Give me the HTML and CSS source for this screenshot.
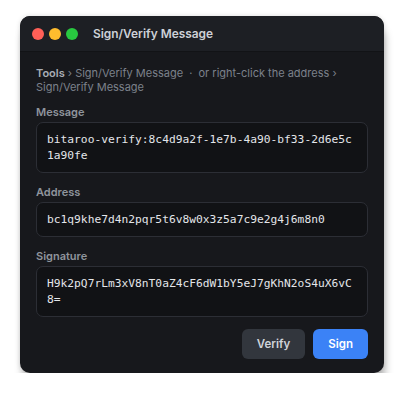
FILE: index.html
```html
<!DOCTYPE html>
<html lang="en">
<head>
<meta charset="utf-8">
<title>Sign/Verify Message</title>
<link rel="stylesheet" href="styles.css">
</head>
<body>
  <div class="window">
    <header class="titlebar">
      <div class="lights">
        <span class="light red"></span>
        <span class="light yellow"></span>
        <span class="light green"></span>
      </div>
      <div class="title">Sign/Verify Message</div>
    </header>
    <main class="content">
      <p class="crumbs"><b>Tools</b> › Sign/Verify Message <span class="dot">·</span> or right-click the address › Sign/Verify Message</p>

      <section class="field">
        <label class="label">Message</label>
        <div class="box">bitaroo-verify:8c4d9a2f-1e7b-4a90-bf33-2d6e5c1a90fe</div>
      </section>

      <section class="field">
        <label class="label">Address</label>
        <div class="box">bc1q9khe7d4n2pqr5t6v8w0x3z5a7c9e2g4j6m8n0</div>
      </section>

      <section class="field">
        <label class="label">Signature</label>
        <div class="box">H9k2pQ7rLm3xV8nT0aZ4cF6dW1bY5eJ7gKhN2oS4uX6vC8=</div>
      </section>

      <div class="actions">
        <button class="btn btn-secondary">Verify</button>
        <button class="btn btn-primary">Sign</button>
      </div>
    </main>
  </div>
</body>
</html>
```

FILE: styles.css
```css
html, body {
  margin: 0;
  padding: 0;
  background: #ffffff;
}

body {
  padding: 16px 20px 0 20px;
  font-family: Inter, "Noto Sans", "Liberation Sans", sans-serif;
}

.window {
  width: 364px;
  background: #17181c;
  border-radius: 10px;
  overflow: hidden;
  box-shadow: 2px 12px 8px -1px rgba(0, 0, 0, 0.28), 0 0 5px rgba(0, 0, 0, 0.14);
}

/* Title bar with traffic lights */
.titlebar {
  height: 35px;
  display: flex;
  align-items: center;
  padding-left: 12px;
  background: #1d1f24;
  border-bottom: 1px solid #121316;
}

.lights {
  display: flex;
  gap: 5px;
}

.light {
  width: 12px;
  height: 12px;
  border-radius: 50%;
}

.red { background: #ff5f57; }
.yellow { background: #febc2e; }
.green { background: #28c840; }

.title {
  margin-left: 15px;
  font-size: 11.9px;
  font-weight: 600;
  color: #cdd1d7;
}

/* Form body */
.content {
  padding: 14px 16px 14px 16px;
  display: flex;
  flex-direction: column;
}

.crumbs {
  margin: 0 0 11px 0;
  font-size: 11px;
  line-height: 14px;
  color: #7c818b;
}

.crumbs b {
  font-weight: 600;
  color: #a8adb5;
}

.crumbs .dot {
  margin: 0 3px;
}

.field {
  display: flex;
  flex-direction: column;
  margin-bottom: 12px;
}

.label {
  font-size: 11px;
  line-height: 14px;
  font-weight: 600;
  color: #8f949c;
  margin-bottom: 3px;
}

.box {
  background: #111215;
  border: 1px solid #2c2e35;
  border-radius: 7px;
  padding: 8.5px 10px;
  font-family: "DejaVu Sans Mono", "Liberation Mono", monospace;
  font-size: 11.25px;
  line-height: 16px;
  color: #e4e6ea;
  word-break: break-all;
}

.actions {
  display: flex;
  justify-content: flex-end;
  gap: 8px;
}

.btn {
  height: 30px;
  padding: 0 15px;
  border: none;
  border-radius: 6px;
  font-family: Inter, "Noto Sans", "Liberation Sans", sans-serif;
  font-size: 11.5px;
  font-weight: 600;
}

.btn-secondary {
  background: #32363d;
  color: #cfd3d9;
}

.btn-primary {
  background: #3b82f6;
  color: #ffffff;
}
```
